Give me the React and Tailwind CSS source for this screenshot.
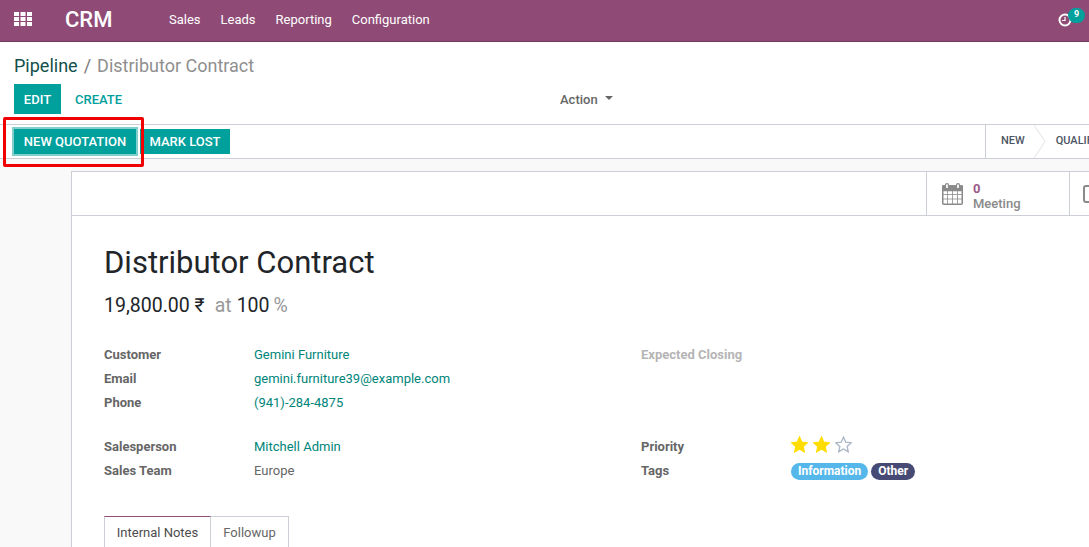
function Field({ label, children, muted }) {
  return (
    <div className="flex h-6 items-center">
      <div className={`w-[150px] font-bold ${muted ? "text-[#b5b5b5]" : "text-[#666666]"}`}>{label}</div>
      <div>{children}</div>
    </div>
  );
}

const Link = ({ children }) => <span className="text-[#00857a]">{children}</span>;

function Star({ filled }) {
  return (
    <svg width="17" height="17" viewBox="0 0 24 24" className="mr-[5px]">
      <path
        d="M12 1.500l3.200 7.200 7.800.8-5.900 5.200 1.700 7.700L12 18.400l-6.800 4 1.700-7.700L1 9.500l7.800-.8z"
        fill={filled ? "#ffdd00" : "none"}
        stroke={filled ? "#ffdd00" : "#a9b4c4"}
        strokeWidth="1.8"
      />
    </svg>
  );
}

export default function App() {
  return (
    <div className="relative h-[547px] w-[1089px] overflow-hidden bg-white font-['Roboto',sans-serif] text-[13px] text-[#666666]">
      <nav className="flex h-[42px] items-center border-b border-[#6d3c5c] bg-[#8f4b76] pb-[2px] text-white">
        <div className="flex w-[46px] justify-center">
          <svg width="18" height="15" viewBox="0 0 18 15" fill="#ffffff">
            {[0, 5, 10].map(y =>
              [0, 6.5, 13].map(x => <rect key={`${x}-${y}`} x={x} y={y} width="5" height="4" />)
            )}
          </svg>
        </div>
        <div className="ml-[19px] w-[104px] text-[22px] font-medium">CRM</div>
        <div className="flex gap-[20px]">
          <span>Sales</span>
          <span>Leads</span>
          <span>Reporting</span>
          <span>Configuration</span>
        </div>
        <div className="relative ml-auto mr-[17px] h-[14px] w-[14px]">
          <svg width="14" height="14" viewBox="0 0 14 14" fill="none" stroke="#ffffff">
            <circle cx="7" cy="7" r="5.500" strokeWidth="2" />
            <path d="M7 4v3.500H4" strokeWidth="1.200" />
          </svg>
          <span className="absolute left-[10px] top-[-5px] flex h-[15px] w-[17px] items-center justify-center rounded-full bg-[#00a09d] text-[9px] font-bold">9</span>
        </div>
      </nav>

      <div className="px-[14px] pt-[11px]">
        <div className="flex h-[24px] items-center text-[18px]">
          <span className="text-[#124f4b]">Pipeline</span>
          <span className="mx-[6px] text-[#777777]">/</span>
          <span className="text-[#8f8f8f]">Distributor Contract</span>
        </div>
        <div className="relative mt-[7px] flex h-[30px] items-center text-[13px] font-medium">
          <button className="h-[30px] w-[47px] bg-[#00a09d] pt-[1px] text-white">EDIT</button>
          <button className="ml-[14px] pt-[1px] text-[#00a09d]">CREATE</button>
          <div className="absolute left-[546px] top-[6px] flex items-center gap-[7px] text-[#666666]">
            <span>Action</span>
            <span className="mb-[3px] border-x-[4px] border-t-[4px] border-x-transparent border-t-[#666666]"></span>
          </div>
        </div>
      </div>

      <div className="mt-[10px] flex h-[35px] items-center border-y border-[#ccd0d6] pl-[14px]">
        <button className="h-[25px] w-[122px] bg-[#00a09d] text-[13px] font-medium text-white shadow-[0_0_0_2px_#80cfce]">NEW QUOTATION</button>
        <button className="ml-[4px] h-[25px] w-[90px] bg-[#00a09d] text-[13px] font-medium text-white">MARK LOST</button>
        <div className="ml-auto flex h-full w-[104px] items-center overflow-hidden border-l border-[#ccd0d6] text-[11px] font-medium text-[#4c5563]">
          <span className="ml-[15px]">NEW</span>
          <svg width="12" height="33" viewBox="0 0 12 33" fill="none" stroke="#dfe2e7" className="ml-[9px] shrink-0">
            <path d="M0 0l11 16.500L0 33" />
          </svg>
          <span className="ml-[10px] whitespace-nowrap">QUALIFIED</span>
        </div>
      </div>

      <div className="h-[400px] bg-[#f9f9f9] pl-[71px] pt-[12px]">
        <div className="h-[400px] w-[1100px] border-l border-t border-[#ccd0d6] bg-white">
          <div className="flex h-[44px] border-b border-[#ccd0d6]">
            <div className="ml-[854px] flex w-[143px] items-center border-l border-[#ccd0d6] pl-[15px]">
              <svg width="21" height="22" viewBox="0 0 21 22" fill="none" stroke="#8a8a8a">
                <rect x="0.750" y="3" width="19.500" height="18.250" rx="1" strokeWidth="1.500" />
                <rect x="0.750" y="3" width="19.500" height="4.500" fill="#8a8a8a" strokeWidth="1.500" />
                <path d="M5.500 8v13M10.500 8v13M15.500 8v13M1 11.500h19M1 16h19" strokeWidth="0.800" />
                <rect x="3.500" y="0.700" width="3" height="5" rx="1.500" fill="#ffffff" strokeWidth="1.200" />
                <rect x="14.500" y="0.700" width="3" height="5" rx="1.500" fill="#ffffff" strokeWidth="1.200" />
              </svg>
              <div className="ml-[10px] mt-[5px] leading-[15px]">
                <div className="font-bold text-[#9b5a88]">0</div>
                <div className="font-medium text-[#8a8a8a]">Meeting</div>
              </div>
            </div>
            <div className="flex w-[40px] items-center border-l border-[#ccd0d6] pl-[13px]">
              <span className="h-[18px] w-[14px] rounded-[3px] border-2 border-[#8a8a8a]"></span>
            </div>
          </div>

          <div className="pl-[32px] pt-[26px]">
            <div className="text-[31px] leading-[42px] text-[#212529]">Distributor Contract</div>
            <div className="mt-[8px] flex h-[28px] items-center text-[19.500px] text-[#212529]">
              <span>19,800.00 ₹</span>
              <span className="ml-[10px] text-[#999999]">at</span>
              <span className="ml-[5px]">100</span>
              <span className="ml-[4px] text-[#999999]">%</span>
            </div>

            <div className="mt-[23px] flex">
              <div className="w-[537px]">
                <Field label="Customer"><Link>Gemini Furniture</Link></Field>
                <Field label="Email"><Link>gemini.furniture39@example.com</Link></Field>
                <Field label="Phone"><Link>(941)-284-4875</Link></Field>
                <div className="h-[20px]"></div>
                <Field label="Salesperson"><Link>Mitchell Admin</Link></Field>
                <Field label="Sales Team">Europe</Field>
              </div>
              <div>
                <Field label="Expected Closing" muted></Field>
                <div className="h-[68px]"></div>
                <Field label="Priority">
                  <div className="mb-[5px] flex">
                    <Star filled />
                    <Star filled />
                    <Star />
                  </div>
                </Field>
                <Field label="Tags">
                  <div className="flex gap-[3px] text-[12px] font-bold text-white">
                    <span className="flex h-[17px] items-center rounded-full bg-[#55b7ea] px-[7px]">Information</span>
                    <span className="flex h-[17px] items-center rounded-full bg-[#474a75] px-[7px]">Other</span>
                  </div>
                </Field>
              </div>
            </div>

            <div className="mt-[33px] flex h-[40px]">
              <div className="w-[107px] border-x border-t border-x-[#ccd0d6] border-t-[#8f4b76] pt-[6px] text-center text-[#4c4c4c]">Internal Notes</div>
              <div className="w-[78px] border-r border-t border-[#ccd0d6] pt-[6px] text-center text-[#666666]">Followup</div>
            </div>
          </div>
        </div>
      </div>

      <div className="absolute left-[3px] top-[117px] h-[50px] w-[141px] rounded-[2px] border-[3px] border-[#f00000]"></div>
    </div>
  );
}
